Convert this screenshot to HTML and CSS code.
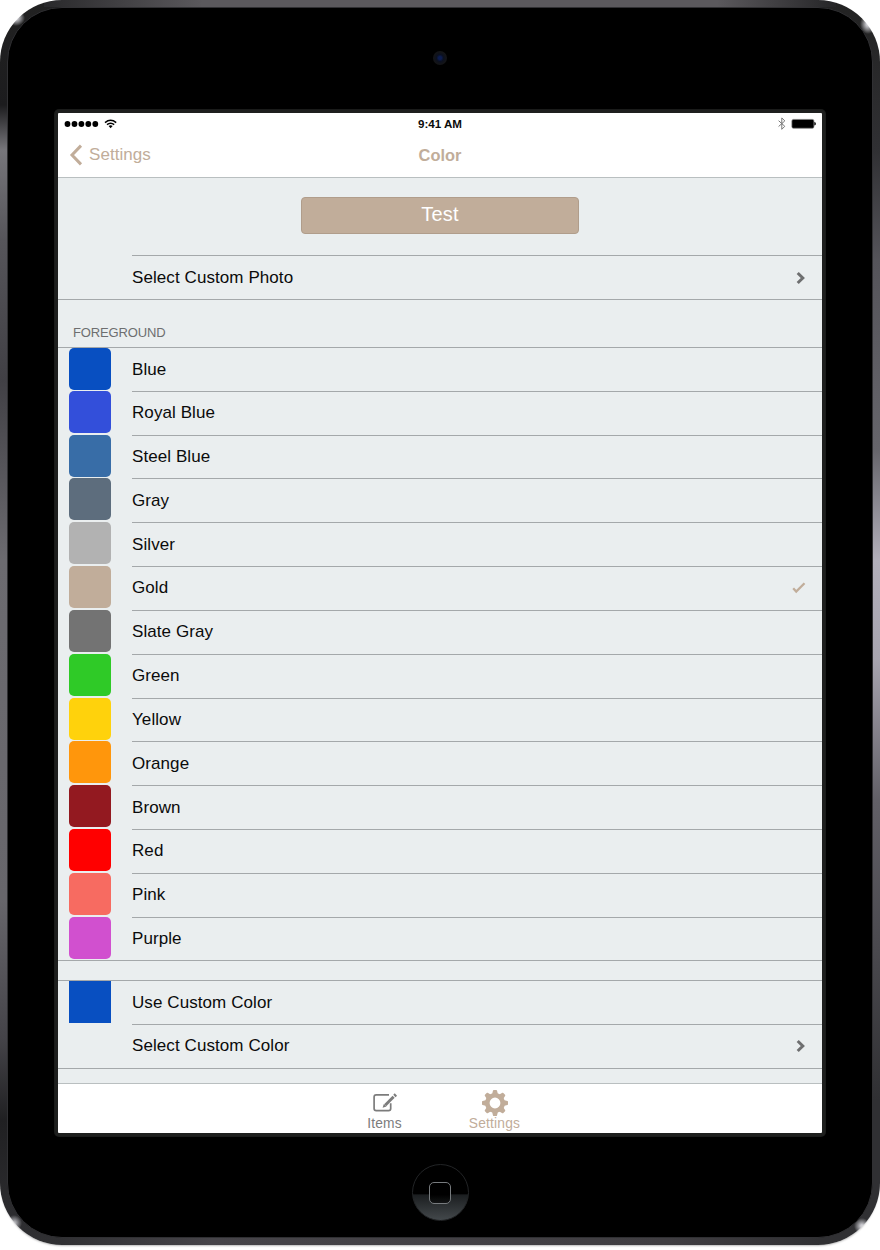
FILE: index.html
```
<!DOCTYPE html>
<html lang="en">
<head>
<meta charset="utf-8">
<title>Color</title>
<link rel="stylesheet" href="styles.css">
</head>
<body>
<div class="device">
  <div class="face">
    <div class="top-bezel"><span class="camera"></span></div>
    <main class="screen">
      <div class="status">
        <div class="signal">
          <svg width="54" height="12" viewBox="0 0 54 12"><g fill="#000"><circle cx="3.5" cy="6" r="2.9"/><circle cx="10.5" cy="6" r="2.9"/><circle cx="17.4" cy="6" r="2.9"/><circle cx="24.3" cy="6" r="2.9"/><circle cx="31.3" cy="6" r="2.9"/><path d="M44.6 8q2-1.5 4 0l-2 2.3z"/></g><g fill="none" stroke="#000" stroke-width="1.5"><path d="M41 4.6q5.6-4.6 11.2 0"/><path d="M43 6.7q3.6-3 7.2 0"/></g></svg>
        </div>
        <span class="time">9:41 AM</span>
        <div class="power">
          <svg width="38" height="14" viewBox="0 0 38 14"><path d="M.6 3.7l6.2 5.6L3.8 12.3V.9l3 3L.6 9.5" fill="none" stroke="#777" stroke-width="1"/><rect x="13.9" y="2.4" width="22" height="8.8" rx="1.5" fill="#000" stroke="#777" stroke-width=".7"/><path d="M36.3 5.1q1.6.2 1.6 1.7t-1.6 1.7z" fill="#000"/></svg>
        </div>
      </div>
      <nav class="navbar">
        <a class="back"><svg width="14" height="22" viewBox="0 0 14 22"><path d="M12 1.6L3 11l9 9.4" fill="none" stroke="#c1ad9a" stroke-width="3"/></svg>Settings</a>
        <h1 class="title">Color</h1>
      </nav>
      <div class="content">
        <div class="test-area"><button class="test">Test</button></div>
        <div class="rows photo">
          <div class="row"><span class="label ruled">Select Custom Photo<svg class="chevron" width="10" height="14" viewBox="0 0 10 14"><path d="M1.7 2L6.8 7l-5.1 5" fill="none" stroke="#6e6f70" stroke-width="3"/></svg></span></div>
        </div>
        <h2 class="section">FOREGROUND</h2>
        <div class="rows list">
          <div class="row"><i class="swatch blue"></i><span class="label">Blue</span></div>
          <div class="row"><i class="swatch royal"></i><span class="label ruled">Royal Blue</span></div>
          <div class="row"><i class="swatch steel"></i><span class="label ruled">Steel Blue</span></div>
          <div class="row"><i class="swatch gray"></i><span class="label ruled">Gray</span></div>
          <div class="row"><i class="swatch silver"></i><span class="label ruled">Silver</span></div>
          <div class="row"><i class="swatch gold"></i><span class="label ruled">Gold<svg class="check" width="14" height="12" viewBox="0 0 14 12"><path d="M1.2 6.3l3 3.2 8.3-8.2" fill="none" stroke="#c1ad9a" stroke-width="2.3"/></svg></span></div>
          <div class="row"><i class="swatch slate"></i><span class="label ruled">Slate Gray</span></div>
          <div class="row"><i class="swatch green"></i><span class="label ruled">Green</span></div>
          <div class="row"><i class="swatch yellow"></i><span class="label ruled">Yellow</span></div>
          <div class="row"><i class="swatch orange"></i><span class="label ruled">Orange</span></div>
          <div class="row"><i class="swatch brown"></i><span class="label ruled">Brown</span></div>
          <div class="row"><i class="swatch red"></i><span class="label ruled">Red</span></div>
          <div class="row"><i class="swatch pink"></i><span class="label ruled">Pink</span></div>
          <div class="row"><i class="swatch purple"></i><span class="label ruled">Purple</span></div>
        </div>
        <div class="rows list custom">
          <div class="row"><i class="swatch blue square"></i><span class="label">Use Custom Color</span></div>
          <div class="row"><span class="label ruled">Select Custom Color<svg class="chevron" width="10" height="14" viewBox="0 0 10 14"><path d="M1.7 2L6.8 7l-5.1 5" fill="none" stroke="#6e6f70" stroke-width="3"/></svg></span></div>
        </div>
      </div>
      <footer class="tabs">
        <a class="tab items">
          <svg width="26" height="26" viewBox="0 0 26 26"><g fill="none" stroke="#7c7c7c"><path d="M17 4.8H4.2Q2.1 4.8 2.1 6.9v11.6q0 2.1 2.1 2.1h12.4q2.1 0 2.1-2.1v-5.2" stroke-width="1.7"/><path d="M13.2 15.2L21.6 6.8" stroke-width="3"/><path d="M22.4 6l1.5-1.5" stroke-width="3.2"/></g><path d="M11.8 13.9l2.7 2.7-3.9 1.2z" fill="#7c7c7c"/></svg>
          Items
        </a>
        <a class="tab active">
          <svg width="26" height="26" viewBox="0 0 26 26"><circle cx="13" cy="13" r="7.7" fill="none" stroke="#c1ad9a" stroke-width="4.6"/><g fill="#c1ad9a"><path id="cog" d="M10 4.5L11 .6q.2-.6.8-.6h2.4q.6 0 .8.6l1 3.9zM10 21.5l1 3.9q.2.6.8.6h2.4q.6 0 .8-.6l1-3.9z"/><use href="#cog" transform="rotate(45 13 13)"/><use href="#cog" transform="rotate(90 13 13)"/><use href="#cog" transform="rotate(135 13 13)"/></g></svg>
          Settings
        </a>
      </footer>
    </main>
    <div class="home-area"><div class="home"><i class="home-mark"></i></div></div>
  </div>
</div>
</body>
</html>
```
FILE: styles.css
```
* { box-sizing: border-box; }
body {
  margin: 0;
  width: 880px;
  height: 1250px;
  overflow: hidden;
  background: #fff;
  font-family: "Liberation Sans", Arial, sans-serif;
  color: #0b0b0b;
}
.device {
  width: 880px;
  height: 1245px;
  padding: 7px;
  border-radius: 62px;
  box-shadow: 0 2px 2px -1px #bbb;
  background:
    radial-gradient(ellipse 9px 8px at 16px 18px, #cdcdd2 20%, transparent),
    radial-gradient(ellipse 8px 10px at 868px 24px, #cdcdd2 20%, transparent),
    radial-gradient(ellipse 8px 8px at 14px 1223px, #b5b5ba 15%, transparent),
    radial-gradient(ellipse 8px 8px at 862px 1226px, #cdcdd2 15%, transparent),
    linear-gradient(90deg, #29292b, #5b595d 20%, #5b595d 85%, #252527) 44px 0 / 792px 7px no-repeat,
    linear-gradient(90deg, #303033, #464449 20%, #403e42 80%, #303033) 60px 1237px / 760px 8px no-repeat,
    linear-gradient(#222, #1c1c1e 105px, #77767b 150px, #56555a 240px, #414045 380px, #6c6b70 560px, #67666b 900px, #444348 1040px, #202022 1120px, #303033) 0 0 / 440px 100% no-repeat,
    linear-gradient(#222, #303033 150px, #55545a 260px, #66656b 450px, #b2afba 560px, #a7a4af 660px, #626067 800px, #4a494e 950px, #303033 1100px, #303033) 440px 0 / 440px 100% no-repeat;
}
.face {
  height: 1231px;
  padding: 0 47px;
  border: 1px solid #303033;
  border-radius: 55px;
  background: #000;
}
.top-bezel {
  height: 102px;
  display: flex;
  justify-content: center;
  padding-top: 43px;
}
.camera {
  width: 14px;
  height: 14px;
  border-radius: 50%;
  background: radial-gradient(circle, #0c1c50 0 15%, #0b1020 35%, #131417 60%, #16171a);
}
.screen {
  width: 770px;
  height: 1026px;
  border: 3px solid #1e1f1e;
  border-radius: 4px;
  box-shadow: 0 0 0 1px #1a1b1a;
  background: #fff;
  display: flex;
  flex-direction: column;
}
.status {
  height: 21px;
  padding: 0 6px;
  display: grid;
  grid-template-columns: 1fr auto 1fr;
  align-items: center;
}
.signal, .power { display: flex; }
.power { justify-content: flex-end; }
.time { font-size: 11.6px; font-weight: bold; line-height: 21px; }
.navbar {
  height: 44px;
  border-bottom: 1px solid #b9bfc0;
  padding-left: 11px;
  display: grid;
  grid-template-columns: 1fr auto 1fr;
  align-items: center;
  color: #c1ad9a;
}
.navbar::after { content: ""; }
.back {
  display: flex;
  align-items: center;
  gap: 6px;
  margin-top: -1px;
  font-size: 17px;
  letter-spacing: .05px;
  line-height: 42px;
}
.title {
  margin: -2px 11px 0 0;
  font-size: 16.4px;
  line-height: 42px;
}
.content {
  flex: 1;
  background: #eaeeef;
  overflow: hidden;
}
.test-area {
  height: 77px;
  padding-top: 19px;
  display: flex;
  justify-content: center;
  align-items: flex-start;
}
.test {
  width: 278px;
  height: 37px;
  padding: 0 0 2px;
  border: 1px solid #b09d8b;
  border-radius: 4px;
  background: #c1ad9a;
  color: #fff;
  font: 20px/33px "Liberation Sans", Arial, sans-serif;
  letter-spacing: .2px;
}
.rows {
  border-top: 1px solid #a4a8aa;
  border-bottom: 1px solid #a4a8aa;
}
.photo { height: 45px; border-top: 0; }
.photo .label { padding-top: 1px; }
.row {
  height: 43.82px;
  display: flex;
  padding-left: 11px;
}
.list .row:first-child { height: 42.82px; }
.swatch {
  width: 42px;
  height: 42px;
  border-radius: 5px;
  margin-right: -42px;
}
.square { border-radius: 0; }
.label {
  flex: 1;
  margin-left: 63px;
  padding-right: 15px;
  display: flex;
  justify-content: space-between;
  align-items: center;
  font-size: 17px;
  letter-spacing: .08px;
  border-top: 1px solid transparent;
}
.ruled { border-top-color: #a4a8aa; }
.chevron, .check { margin-right: 1px; }
.section {
  margin: 0;
  height: 47px;
  padding: 24px 0 0 15px;
  font-size: 13px;
  font-weight: normal;
  line-height: 17px;
  letter-spacing: -.15px;
  color: #6d6e70;
}
.custom { margin-top: 18.6px; }
.blue { background: #084fc1; }
.royal { background: #334fda; }
.steel { background: #386da7; }
.gray { background: #5d6d7d; }
.silver { background: #b2b2b2; }
.gold { background: #c1ad9a; }
.slate { background: #737373; }
.green { background: #2fca27; }
.yellow { background: #ffd20c; }
.orange { background: #ff960c; }
.brown { background: #931920; }
.red { background: #ff0000; }
.pink { background: #f76b61; }
.purple { background: #d150cf; }
.tabs {
  height: 50px;
  border-top: 1px solid #b9bfc0;
  display: flex;
  justify-content: center;
  gap: 34px;
  padding-right: 1px;
}
.tab {
  width: 76px;
  padding-top: 6px;
  display: flex;
  flex-direction: column;
  align-items: center;
  font-size: 13.8px;
  line-height: 15px;
  letter-spacing: .2px;
}
.items { color: #7c7c7c; }
.active { color: #c1ad9a; }
.home-area {
  display: flex;
  justify-content: center;
  padding-top: 28px;
}
.home {
  width: 57px;
  height: 57px;
  border: 1px solid #222426;
  border-radius: 50%;
  display: flex;
  justify-content: center;
  align-items: center;
  background: linear-gradient(#000 53%, #1b1e20 54%, #43484b);
}
.home-mark {
  width: 22px;
  height: 22px;
  border: 1.5px solid #777b7e;
  border-radius: 5px;
  background: linear-gradient(#000 58%, #121415);
}
```
